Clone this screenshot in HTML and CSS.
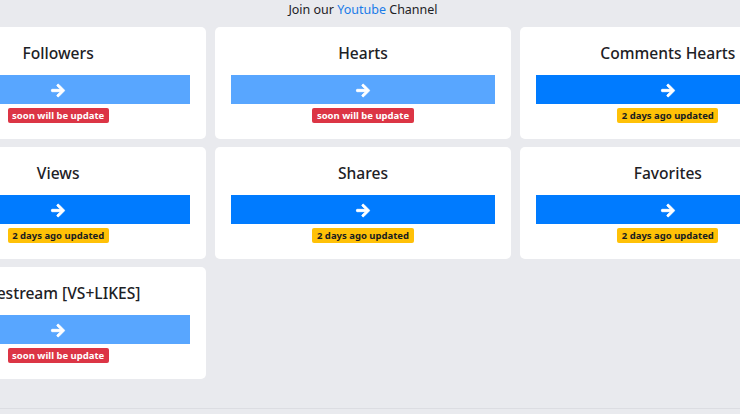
FILE: index.html
```html
<!DOCTYPE html>
<html>
<head>
<meta charset="utf-8">
<link rel="stylesheet" href="styles.css">
</head>
<body>
<div class="page">
  <div class="wrap">
    <div class="join">Join our <a class="yt" href="#">Youtube</a> Channel</div>
    <div class="grid">
      <div class="card">
        <div class="title">Followers</div>
        <div class="btn light"><svg class="arrow" viewBox="-20 0 488 512"><path d="M190.5 66.9l22.2-22.2c9.4-9.4 24.6-9.4 33.9 0L441 239c9.4 9.4 9.4 24.6 0 33.9L246.6 467.3c-9.4 9.4-24.6 9.4-33.9 0l-22.2-22.2c-9.5-9.5-9.3-25 .4-34.3L311.4 296H24c-13.3 0-24-10.7-24-24v-32c0-13.3 10.7-24 24-24h287.4L190.9 101.2c-9.8-9.3-10-24.8-.4-34.3z"/></svg></div>
        <div class="badge-row"><span class="badge red">soon will be update</span></div>
      </div>
      <div class="card">
        <div class="title">Hearts</div>
        <div class="btn light"><svg class="arrow" viewBox="-20 0 488 512"><path d="M190.5 66.9l22.2-22.2c9.4-9.4 24.6-9.4 33.9 0L441 239c9.4 9.4 9.4 24.6 0 33.9L246.6 467.3c-9.4 9.4-24.6 9.4-33.9 0l-22.2-22.2c-9.5-9.5-9.3-25 .4-34.3L311.4 296H24c-13.3 0-24-10.7-24-24v-32c0-13.3 10.7-24 24-24h287.4L190.9 101.2c-9.8-9.3-10-24.8-.4-34.3z"/></svg></div>
        <div class="badge-row"><span class="badge red">soon will be update</span></div>
      </div>
      <div class="card">
        <div class="title">Comments Hearts</div>
        <div class="btn"><svg class="arrow" viewBox="-20 0 488 512"><path d="M190.5 66.9l22.2-22.2c9.4-9.4 24.6-9.4 33.9 0L441 239c9.4 9.4 9.4 24.6 0 33.9L246.6 467.3c-9.4 9.4-24.6 9.4-33.9 0l-22.2-22.2c-9.5-9.5-9.3-25 .4-34.3L311.4 296H24c-13.3 0-24-10.7-24-24v-32c0-13.3 10.7-24 24-24h287.4L190.9 101.2c-9.8-9.3-10-24.8-.4-34.3z"/></svg></div>
        <div class="badge-row"><span class="badge yellow">2 days ago updated</span></div>
      </div>
      <div class="card">
        <div class="title">Views</div>
        <div class="btn"><svg class="arrow" viewBox="-20 0 488 512"><path d="M190.5 66.9l22.2-22.2c9.4-9.4 24.6-9.4 33.9 0L441 239c9.4 9.4 9.4 24.6 0 33.9L246.6 467.3c-9.4 9.4-24.6 9.4-33.9 0l-22.2-22.2c-9.5-9.5-9.3-25 .4-34.3L311.4 296H24c-13.3 0-24-10.7-24-24v-32c0-13.3 10.7-24 24-24h287.4L190.9 101.2c-9.8-9.3-10-24.8-.4-34.3z"/></svg></div>
        <div class="badge-row"><span class="badge yellow">2 days ago updated</span></div>
      </div>
      <div class="card">
        <div class="title">Shares</div>
        <div class="btn"><svg class="arrow" viewBox="-20 0 488 512"><path d="M190.5 66.9l22.2-22.2c9.4-9.4 24.6-9.4 33.9 0L441 239c9.4 9.4 9.4 24.6 0 33.9L246.6 467.3c-9.4 9.4-24.6 9.4-33.9 0l-22.2-22.2c-9.5-9.5-9.3-25 .4-34.3L311.4 296H24c-13.3 0-24-10.7-24-24v-32c0-13.3 10.7-24 24-24h287.4L190.9 101.2c-9.8-9.3-10-24.8-.4-34.3z"/></svg></div>
        <div class="badge-row"><span class="badge yellow">2 days ago updated</span></div>
      </div>
      <div class="card">
        <div class="title">Favorites</div>
        <div class="btn"><svg class="arrow" viewBox="-20 0 488 512"><path d="M190.5 66.9l22.2-22.2c9.4-9.4 24.6-9.4 33.9 0L441 239c9.4 9.4 9.4 24.6 0 33.9L246.6 467.3c-9.4 9.4-24.6 9.4-33.9 0l-22.2-22.2c-9.5-9.5-9.3-25 .4-34.3L311.4 296H24c-13.3 0-24-10.7-24-24v-32c0-13.3 10.7-24 24-24h287.4L190.9 101.2c-9.8-9.3-10-24.8-.4-34.3z"/></svg></div>
        <div class="badge-row"><span class="badge yellow">2 days ago updated</span></div>
      </div>
      <div class="card">
        <div class="title">Livestream [VS+LIKES]</div>
        <div class="btn light"><svg class="arrow" viewBox="-20 0 488 512"><path d="M190.5 66.9l22.2-22.2c9.4-9.4 24.6-9.4 33.9 0L441 239c9.4 9.4 9.4 24.6 0 33.9L246.6 467.3c-9.4 9.4-24.6 9.4-33.9 0l-22.2-22.2c-9.5-9.5-9.3-25 .4-34.3L311.4 296H24c-13.3 0-24-10.7-24-24v-32c0-13.3 10.7-24 24-24h287.4L190.9 101.2c-9.8-9.3-10-24.8-.4-34.3z"/></svg></div>
        <div class="badge-row"><span class="badge red">soon will be update</span></div>
      </div>
    </div>
  </div>
  <div class="footer-line"></div>
</div>
</body>
</html>
```
FILE: styles.css
```css
html, body {
  margin: 0;
  padding: 0;
  background: #e9eaee;
  overflow: hidden;
  font-family: "Noto Sans", "Open Sans", "Liberation Sans", sans-serif;
  color: #212529;
}
.page {
  width: 740px;
  height: 414px;
  overflow: hidden;
}
.wrap {
  width: 906px;
  margin-left: -90px;
}
.join {
  text-align: center;
  font-size: 12.5px;
  line-height: 20px;
  height: 21px;
  color: #1d2125;
}
.yt {
  color: #1a7be8;
  text-decoration: none;
}
.grid {
  margin-top: 6px;
  display: grid;
  grid-template-columns: repeat(3, 1fr);
  column-gap: 8.5px;
  row-gap: 8px;
}
.card {
  background: #fff;
  border-radius: 5px;
  padding: 16px 16px 16px;
  display: flex;
  flex-direction: column;
}
.title {
  text-align: center;
  font-size: 15.6px;
  font-weight: 500;
  line-height: 20px;
  height: 20px;
  color: #1d2125;
}
.btn {
  margin-top: 12px;
  height: 29px;
  background: #007bff;
  display: flex;
  align-items: center;
  justify-content: center;
}
.btn.light {
  background: #58a6ff;
}
.arrow {
  width: 16px;
  height: 15px;
  margin-top: 2px;
  fill: #fff;
  stroke: #fff;
  stroke-width: 30;
  stroke-linejoin: round;
}
.badge-row {
  margin-top: 4px;
  display: flex;
  justify-content: center;
}
.badge {
  font-size: 9.5px;
  font-weight: 700;
  line-height: 15px;
  height: 15px;
  padding: 0 4.5px;
  border-radius: 2px;
}
.badge.red {
  background: #dc3545;
  color: #fff;
}
.badge.yellow {
  background: #ffc107;
  color: #1a1d20;
}
.footer-line {
  margin-top: 29px;
  height: 1px;
  background: #dcdde2;
}
```
